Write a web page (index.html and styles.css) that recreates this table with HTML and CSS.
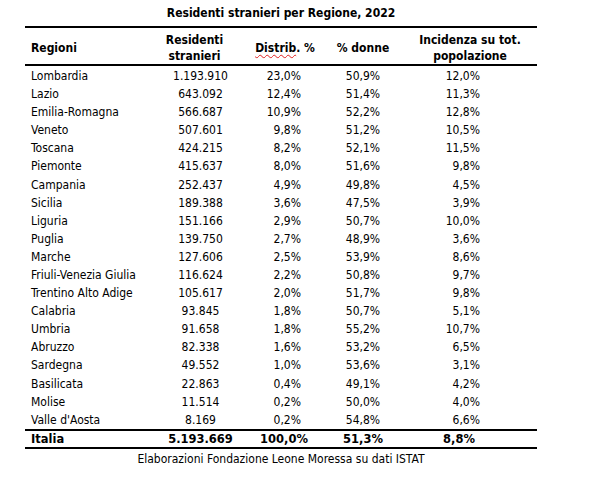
FILE: index.html
```html
<!DOCTYPE html>
<html lang="it">
<head>
<meta charset="utf-8">
<title>Residenti stranieri per Regione, 2022</title>
<link rel="stylesheet" href="styles.css">
</head>
<body>
<div class="wrap">
  <div class="title">Residenti stranieri per Regione, 2022</div>
  <table class="tbl">
    <colgroup>
      <col class="w1"><col class="w2"><col class="w3"><col class="w4"><col class="w5">
    </colgroup>
    <thead>
      <tr>
        <th class="c1">Regioni</th>
        <th class="c2">Residenti<br>stranieri</th>
        <th class="c3"><span class="spell">Distrib</span>. %</th>
        <th class="c4">% donne</th>
        <th class="c5">Incidenza su tot.<br>popolazione</th>
      </tr>
    </thead>
    <tbody>
      <tr><td class="c1">Lombardia</td><td class="c2">1.193.910</td><td class="c3">23,0%</td><td class="c4">50,9%</td><td class="c5">12,0%</td></tr>
      <tr><td class="c1">Lazio</td><td class="c2">643.092</td><td class="c3">12,4%</td><td class="c4">51,4%</td><td class="c5">11,3%</td></tr>
      <tr><td class="c1">Emilia-Romagna</td><td class="c2">566.687</td><td class="c3">10,9%</td><td class="c4">52,2%</td><td class="c5">12,8%</td></tr>
      <tr><td class="c1">Veneto</td><td class="c2">507.601</td><td class="c3">9,8%</td><td class="c4">51,2%</td><td class="c5">10,5%</td></tr>
      <tr><td class="c1">Toscana</td><td class="c2">424.215</td><td class="c3">8,2%</td><td class="c4">52,1%</td><td class="c5">11,5%</td></tr>
      <tr><td class="c1">Piemonte</td><td class="c2">415.637</td><td class="c3">8,0%</td><td class="c4">51,6%</td><td class="c5">9,8%</td></tr>
      <tr><td class="c1">Campania</td><td class="c2">252.437</td><td class="c3">4,9%</td><td class="c4">49,8%</td><td class="c5">4,5%</td></tr>
      <tr><td class="c1">Sicilia</td><td class="c2">189.388</td><td class="c3">3,6%</td><td class="c4">47,5%</td><td class="c5">3,9%</td></tr>
      <tr><td class="c1">Liguria</td><td class="c2">151.166</td><td class="c3">2,9%</td><td class="c4">50,7%</td><td class="c5">10,0%</td></tr>
      <tr><td class="c1">Puglia</td><td class="c2">139.750</td><td class="c3">2,7%</td><td class="c4">48,9%</td><td class="c5">3,6%</td></tr>
      <tr><td class="c1">Marche</td><td class="c2">127.606</td><td class="c3">2,5%</td><td class="c4">53,9%</td><td class="c5">8,6%</td></tr>
      <tr><td class="c1">Friuli-Venezia Giulia</td><td class="c2">116.624</td><td class="c3">2,2%</td><td class="c4">50,8%</td><td class="c5">9,7%</td></tr>
      <tr><td class="c1">Trentino Alto Adige</td><td class="c2">105.617</td><td class="c3">2,0%</td><td class="c4">51,7%</td><td class="c5">9,8%</td></tr>
      <tr><td class="c1">Calabria</td><td class="c2">93.845</td><td class="c3">1,8%</td><td class="c4">50,7%</td><td class="c5">5,1%</td></tr>
      <tr><td class="c1">Umbria</td><td class="c2">91.658</td><td class="c3">1,8%</td><td class="c4">55,2%</td><td class="c5">10,7%</td></tr>
      <tr><td class="c1">Abruzzo</td><td class="c2">82.338</td><td class="c3">1,6%</td><td class="c4">53,2%</td><td class="c5">6,5%</td></tr>
      <tr><td class="c1">Sardegna</td><td class="c2">49.552</td><td class="c3">1,0%</td><td class="c4">53,6%</td><td class="c5">3,1%</td></tr>
      <tr><td class="c1">Basilicata</td><td class="c2">22.863</td><td class="c3">0,4%</td><td class="c4">49,1%</td><td class="c5">4,2%</td></tr>
      <tr><td class="c1">Molise</td><td class="c2">11.514</td><td class="c3">0,2%</td><td class="c4">50,0%</td><td class="c5">4,0%</td></tr>
      <tr><td class="c1">Valle d'Aosta</td><td class="c2">8.169</td><td class="c3">0,2%</td><td class="c4">54,8%</td><td class="c5">6,6%</td></tr>
    </tbody>
    <tfoot>
      <tr class="tot"><td class="c1">Italia</td><td class="c2">5.193.669</td><td class="c3">100,0%</td><td class="c4">51,3%</td><td class="c5">8,8%</td></tr>
    </tfoot>
  </table>
  <div class="source">Elaborazioni Fondazione Leone Moressa su dati ISTAT</div>
</div>
</body>
</html>
```
FILE: styles.css
```css
html, body {
  margin: 0;
  padding: 0;
  background: #fff;
}
body {
  font-family: "DejaVu Sans Condensed", "DejaVu Sans", sans-serif;
  font-size: 12px;
  color: #000;
}
.wrap {
  padding-left: 25px;
  width: 512px;
}
.title {
  height: 26px;
  line-height: 27px;
  text-align: center;
  font-weight: bold;
  font-size: 12px;
}
.tbl {
  width: 512px;
  border-collapse: collapse;
  table-layout: fixed;
}
.w1 { width: 125px; }
.w2 { width: 95px; }
.w3 { width: 80px; }
.w4 { width: 80px; }
.w5 { width: 132px; }
.tbl th, .tbl td {
  padding: 0;
  white-space: nowrap;
}
.tbl thead th {
  border-top: 2px solid #000;
  border-bottom: 2px solid #000;
  height: 33px;
  padding-top: 3px;
  font-weight: bold;
  line-height: 16px;
  vertical-align: middle;
  text-align: center;
}
.tbl thead .c1 { text-align: left; padding-left: 6px; }
.tbl thead .c2 { padding-right: 6px; }
.tbl thead .c4 { padding-right: 4px; }
.tbl thead .c5 { padding-left: 0; padding-right: 2px; }
.spell {
  text-decoration: underline wavy #e02020;
  text-decoration-thickness: 1px;
  text-underline-offset: 2px;
}
.tbl tbody td {
  height: 18.1px;
  line-height: 18px;
}
.tbl tbody tr:first-child td { height: 18px; padding-top: 1px; }
.tbl td.c1 { text-align: left; padding-left: 6px; }
.tbl td.c2 { text-align: center; padding-left: 6px; }
.tbl td.c3 { text-align: right; padding-right: 24px; }
.tbl td.c4 { text-align: center; padding-right: 4px; }
.tbl td.c5 { text-align: right; padding-right: 57px; }
.tbl .tot td {
  border-top: 2px solid #000;
  border-bottom: 2px solid #000;
  height: 16px;
  line-height: 16px;
  font-family: "DejaVu Sans", sans-serif;
  font-weight: bold;
  font-size: 11.5px;
}
.tbl .tot td.c3 { padding-right: 17px; }
.tbl .tot td.c5 { text-align: center; padding-right: 24px; }
.source {
  text-align: center;
  line-height: 21px;
}
```
